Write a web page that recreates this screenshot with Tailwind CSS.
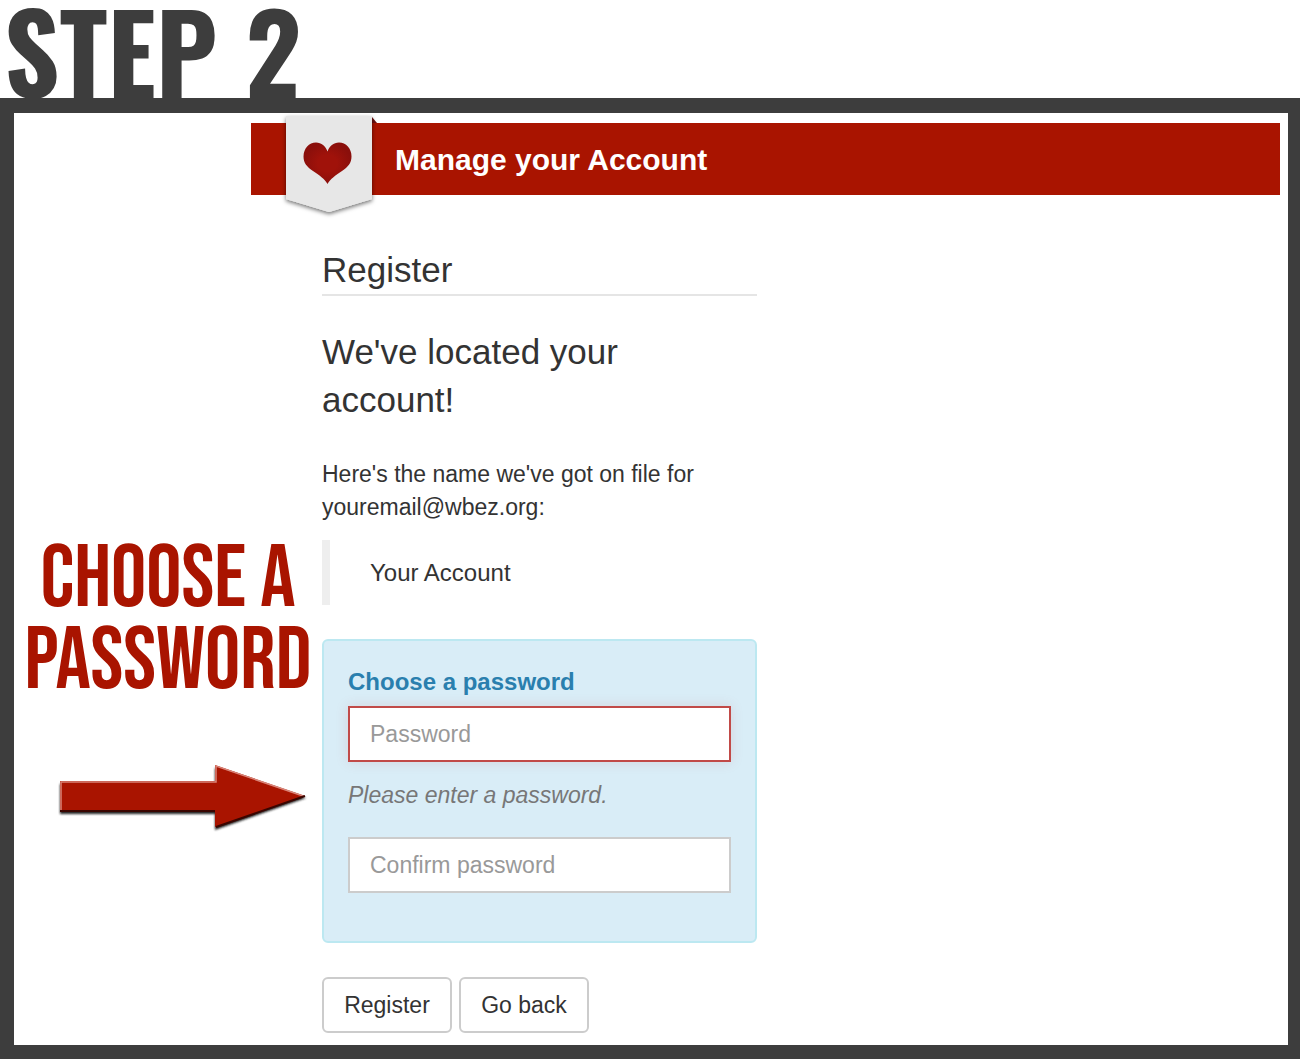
<!DOCTYPE html>
<html lang="en">
  <head>
    <meta charset="UTF-8" />
    <meta name="viewport" content="width=device-width, initial-scale=1.0" />
    <script src="https://cdn.jsdelivr.net/npm/@tailwindcss/browser@4"></script>
    <title>Manage your Account – Register</title>
  </head>
  <body class="min-h-screen flex flex-col bg-white font-['Liberation_Sans',Arial,sans-serif] text-[#333]">
    <!-- Step title -->
    <h1 class="flex h-[98px] items-center gap-7 pl-1 font-[Oswald,'Bebas_Neue',sans-serif] text-[108px] leading-[98px] font-bold text-[#3d3d3d]">
      <span>STEP</span>
      <span>2</span>
    </h1>

    <main class="flex-1 border-[14px] border-t-[15px] border-r-[12px] border-[#3d3d3d] pt-2.5 pb-3">
      <!-- Banner -->
      <header class="relative mr-2 ml-[237px] flex h-[72px] items-center bg-[#a91400] pl-36">
        <svg class="absolute -top-3 left-6 h-[112px] w-[112px]" viewBox="0 0 112 112" aria-hidden="true">
          <defs>
            <filter id="ribbonShadow" x="-20%" y="-20%" width="140%" height="140%">
              <feDropShadow dx="0" dy="2" stdDeviation="2" flood-color="#000" flood-opacity="0.55" />
            </filter>
            <radialGradient id="heartFill">
              <stop offset="0.4" stop-color="#a0120a" />
              <stop offset="1" stop-color="#8a0f0b" />
            </radialGradient>
          </defs>
          <path d="M97 6l5 6h-5z" fill="#6b1010" />
          <path d="M11 5h86v83L54 101 11 88z" fill="#e7e7e7" filter="url(#ribbonShadow)" />
          <path d="M11 5h86v83L54 101 11 88z" fill="#e7e7e7" />
          <path d="M52.500 73C50 68 44 64 38 60 32 56 28.500 52 28.500 45.500c0-8 5.500-14 12.500-14 5.500 0 9.500 3.500 11.500 9 2-5.500 6-9 11.500-9 7 0 12.500 6 12.500 14C76.500 52 73 56 67 60 61 64 55 68 52.500 73z" fill="url(#heartFill)" />
        </svg>
        <h2 class="text-[30px] font-bold text-white">Manage your Account</h2>
      </header>

      <div class="flex">
        <!-- Callout -->
        <aside class="w-[308px] shrink-0 pt-[344px] text-center text-[#a91400]">
          <p class="font-['Bebas_Neue',Roboto,sans-serif] text-[88px] leading-[82px]">
            CHOOSE A<br />PASSWORD
          </p>
          <svg class="mt-[61px] ml-10 h-[76px] w-[260px]" viewBox="0 0 260 76" aria-hidden="true">
            <defs>
              <filter id="arrowShadow" x="-5%" y="-10%" width="110%" height="125%">
                <feGaussianBlur stdDeviation="0.8" />
              </filter>
            </defs>
            <path d="M6 20h155V4l91 30-91 32V50H6z" fill="#222" filter="url(#arrowShadow)" />
            <path d="M6 17h155V1l90 31-90 31V47H6z" fill="#a91400" />
            <path d="M7 47V18h155V2l87 30" fill="none" stroke="#d98478" stroke-width="1.500" />
            <path d="M6 47h155M162 63l89-31" fill="none" stroke="#3a0500" stroke-width="2" />
          </svg>
        </aside>

        <!-- Register form -->
        <form class="w-[435px] pt-[51px] text-[23px] leading-[33px]">
          <h3 class="border-b-2 border-[#e5e5e5] text-[35px] leading-[48px]">Register</h3>
          <h4 class="mt-8 text-[35px] leading-[48px]">We've located your account!</h4>
          <p class="mt-[34px]">Here's the name we've got on file for youremail@wbez.org:</p>
          <blockquote class="mt-4 border-l-8 border-[#eee] py-4 pl-10 text-[24px]">Your Account</blockquote>

          <div class="mt-[34px] rounded-md border-2 border-[#bce8f1] bg-[#d9edf7] px-6 pt-6 pb-12">
            <label for="password" class="block text-[24px] font-bold text-[#2a7fae]">Choose a password</label>
            <input
              type="password"
              id="password"
              placeholder="Password"
              class="mt-2 block h-14 w-full border-2 border-[#c14a48] bg-white px-5 shadow-[0_0_12px_rgba(193,74,72,0.15)] placeholder:text-[#999] focus:outline-none"
            />
            <p class="mt-[17px] text-[#777] italic">Please enter a password.</p>
            <input
              type="password"
              id="confirmPassword"
              aria-label="Confirm password"
              placeholder="Confirm password"
              class="mt-[25px] block h-14 w-full border-2 border-[#ccc] bg-white px-5 placeholder:text-[#999] focus:outline-none"
            />
          </div>

          <div class="mt-[34px] flex gap-[7px]">
            <button type="submit" class="h-14 w-[130px] rounded-md border-2 border-[#ccc] bg-white">Register</button>
            <button type="button" class="h-14 w-[130px] rounded-md border-2 border-[#ccc] bg-white">Go back</button>
          </div>
        </form>
      </div>
    </main>
  </body>
</html>
